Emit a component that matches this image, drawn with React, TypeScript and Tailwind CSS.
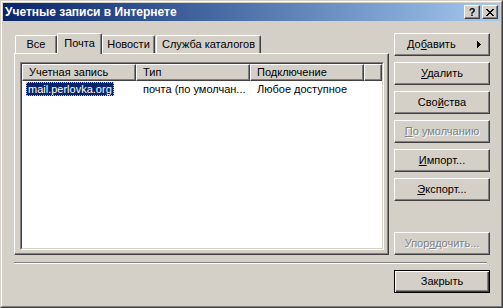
import React from "react";

const F = { fontFamily: '"Liberation Sans", Arial, sans-serif' };

function U({ children }: { children: React.ReactNode }) {
  return <span className="underline underline-offset-[1px]">{children}</span>;
}

function Btn({
  children,
  disabled,
  def,
  between,
  className = "",
}: {
  children: React.ReactNode;
  disabled?: boolean;
  def?: boolean;
  between?: boolean;
  className?: string;
}) {
  const base = def
    ? "border border-black shadow-[inset_1px_1px_0_#ffffff,inset_-1px_-1px_0_#404040,inset_-2px_-2px_0_#808080]"
    : "border border-t-white border-l-white border-r-[#404040] border-b-[#404040] shadow-[inset_-1px_-1px_0_#808080]";
  return (
    <div
      className={`h-[23px] w-[96px] flex items-center ${
        between ? "justify-between pl-[12px] pr-[8px]" : "justify-center"
      } text-[11px] leading-none bg-[#d4d0c8] ${base} ${
        disabled ? "text-[#808080] [text-shadow:1px_1px_0_#ffffff]" : "text-black"
      } ${className}`}
    >
      {children}
    </div>
  );
}

function HeaderCell({ children, w, last }: { children?: React.ReactNode; w: string; last?: boolean }) {
  return (
    <div
      className={`${w} ${last ? "flex-1" : ""} h-[17px] flex items-center pl-[6px] border border-t-white border-l-white border-r-[#404040] border-b-[#404040] shadow-[inset_-1px_-1px_0_#808080] bg-[#d4d0c8] text-[11px] leading-none text-black whitespace-nowrap overflow-hidden`}
    >
      {children}
    </div>
  );
}

export default function App() {
  return (
    <div
      style={F}
      className="w-[503px] h-[308px] bg-[#d4d0c8] border border-t-[#d4d0c8] border-l-[#d4d0c8] border-r-[#404040] border-b-[#404040] select-none"
    >
      <div className="w-full h-full border border-t-white border-l-white border-r-[#808080] border-b-[#808080] p-[1px] flex flex-col">
        {/* Title bar */}
        <div className="h-[18px] flex items-center bg-gradient-to-r from-[#0a246a] to-[#a6caf0] pl-[2px] pr-[2px]">
          <span className="text-white font-bold text-[12px] leading-none flex-1 whitespace-nowrap">
            Учетные записи в Интернете
          </span>
          <div className="w-[16px] h-[14px] bg-[#d4d0c8] border border-t-white border-l-white border-r-[#404040] border-b-[#404040] shadow-[inset_-1px_-1px_0_#808080] flex items-center justify-center text-[11px] font-bold leading-none text-black">
            ?
          </div>
          <div className="w-[16px] h-[14px] ml-[2px] bg-[#d4d0c8] border border-t-white border-l-white border-r-[#404040] border-b-[#404040] shadow-[inset_-1px_-1px_0_#808080] flex items-center justify-center">
            <svg width="8" height="7" viewBox="0 0 8 7" shapeRendering="crispEdges">
              <path
                d="M0 0h2v1h-2zM6 0h2v1h-2zM1 1h2v1h-2zM5 1h2v1h-2zM2 2h4v1h-4zM3 3h2v1h-2zM2 4h4v1h-4zM1 5h2v1h-2zM5 5h2v1h-2zM0 6h2v1h-2zM6 6h2v1h-2z"
                fill="#000"
              />
            </svg>
          </div>
        </div>

        {/* Body */}
        <div className="flex pt-[12px] pl-[11px]">
          {/* Left column */}
          <div className="w-[375px] flex flex-col">
            {/* Tabs */}
            <div className="h-[20px] flex items-end pl-[1px] text-[11px] leading-none text-black">
              <div className="w-[42px] h-[18px] flex items-center justify-center border-t border-l border-t-white border-l-white border-r border-r-[#404040] shadow-[inset_-1px_0_0_#808080] rounded-tl-[2px] rounded-tr-[2px]">
                Все
              </div>
              <div className="relative z-10 w-[45px] h-[21px] -mb-[1px] flex items-center justify-center pb-[2px] bg-[#d4d0c8] border-t border-l border-t-white border-l-white border-r border-r-[#404040] shadow-[inset_-1px_0_0_#808080] rounded-tl-[2px] rounded-tr-[2px]">
                Почта
              </div>
              <div className="w-[53px] h-[18px] flex items-center justify-center border-t border-l border-t-white border-l-white border-r border-r-[#404040] shadow-[inset_-1px_0_0_#808080] rounded-tr-[2px]">
                Новости
              </div>
              <div className="w-[105px] h-[18px] ml-[1px] flex items-center justify-center border-t border-l border-t-white border-l-white border-r border-r-[#404040] shadow-[inset_-1px_0_0_#808080] rounded-tl-[2px] rounded-tr-[2px]">
                Служба каталогов
              </div>
            </div>
            {/* Panel */}
            <div className="h-[202px] border border-t-white border-l-white border-r-[#404040] border-b-[#404040] shadow-[inset_-1px_-1px_0_#808080] pl-[5px] pt-[8px]">
              {/* List view */}
              <div className="w-[364px] h-[188px] border border-t-[#808080] border-l-[#808080] border-r-white border-b-white">
                <div className="w-full h-full border border-t-[#404040] border-l-[#404040] border-r-[#d4d0c8] border-b-[#d4d0c8] bg-white flex flex-col">
                  <div className="flex">
                    <HeaderCell w="w-[114px]">Учетная запись</HeaderCell>
                    <HeaderCell w="w-[114px]">Тип</HeaderCell>
                    <HeaderCell w="w-[114px]">Подключение</HeaderCell>
                    <HeaderCell w="" last />
                  </div>
                  <div className="flex h-[16px] items-center text-[11px] leading-none text-black">
                    <div className="w-[114px] pl-[4px] flex">
                      <span className="h-[14px] px-[1px] flex items-center bg-[#0a246a] text-white border border-dotted border-[#c8c89a] whitespace-nowrap">
                        mail.perlovka.org
                      </span>
                    </div>
                    <div className="w-[114px] pl-[7px] whitespace-nowrap overflow-hidden">
                      почта (по умолчан...
                    </div>
                    <div className="w-[114px] pl-[7px] whitespace-nowrap">Любое доступное</div>
                  </div>
                </div>
              </div>
            </div>
          </div>

          {/* Right column */}
          <div className="ml-[5px] flex flex-col">
            <Btn between>
              <span>
                До<U>б</U>авить
              </span>
              <svg width="4" height="7" viewBox="0 0 4 7" shapeRendering="crispEdges">
                <path d="M0 0h1v7h-1zM1 1h1v5h-1zM2 2h1v3h-1zM3 3h1v1h-1z" fill="#000" />
              </svg>
            </Btn>
            <Btn className="mt-[6px]">
              <span>
                <U>У</U>далить
              </span>
            </Btn>
            <Btn className="mt-[6px]">
              <span>
                Сво<U>й</U>ства
              </span>
            </Btn>
            <Btn className="mt-[6px]" disabled>
              <span>
                <U>П</U>о умолчанию
              </span>
            </Btn>
            <Btn className="mt-[6px]">
              <span>
                <U>И</U>мпорт...
              </span>
            </Btn>
            <Btn className="mt-[6px]">
              <span>
                <U>Э</U>кспорт...
              </span>
            </Btn>
            <Btn className="mt-[31px]" disabled>
              <span>
                Упор<U>я</U>дочить...
              </span>
            </Btn>
          </div>
        </div>

        {/* Separator */}
        <div className="ml-[11px] mt-[7px] w-[473px] h-[2px] border-t border-t-[#808080] border-b border-b-white" />

        {/* Close */}
        <div className="ml-[391px] mt-[6px]">
          <Btn def>Закрыть</Btn>
        </div>
      </div>
    </div>
  );
}
